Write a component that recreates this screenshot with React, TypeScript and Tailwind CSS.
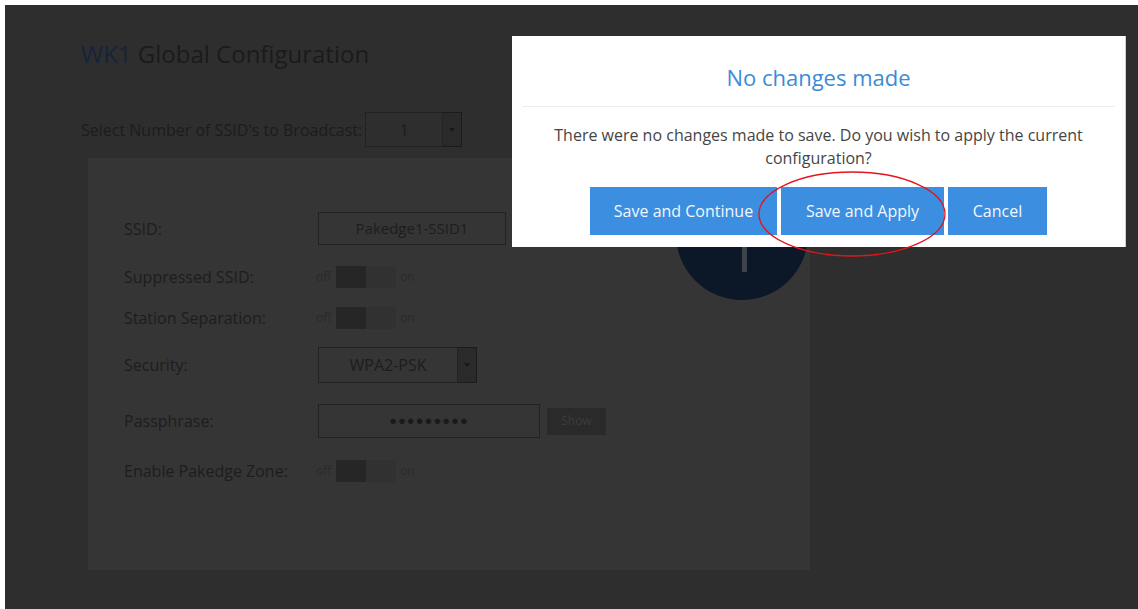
import React from "react";

interface FieldRowProps {
  label: string;
  height: string;
  top: string;
  children: React.ReactNode;
}

// one label/control line of the wireless form
const FieldRow = ({ label, height, top, children }: FieldRowProps) => (
  <div className={`flex items-center ${height} ${top}`}>
    <div className="w-[194px] shrink-0 text-[16px] text-[#1d1d1d]">{label}</div>
    <div className="flex items-center">{children}</div>
  </div>
);

const OffOnToggle = () => (
  <div className="flex items-center text-[12px] text-[#2a2a2a]">
    <span className="w-[20px] -ml-[2px]">off</span>
    <div className="flex h-[22px] w-[60px]">
      <div className="w-1/2 bg-[#262626]" />
      <div className="w-1/2 bg-[#313131]" />
    </div>
    <span className="ml-[4px]">on</span>
  </div>
);

const SelectBox = ({ value, width }: { value: string; width: string }) => (
  <div className="flex items-stretch h-full">
    <div
      className={`${width} flex items-center justify-center border border-[#222] text-[16px] text-[#1d1d1d]`}
    >
      {value}
    </div>
    <div className="w-[19px] flex items-center justify-center border border-[#1b1b1b] border-l-0 bg-[#2a2a2a]">
      <div className="w-0 h-0 border-l-[3px] border-r-[3px] border-t-[4px] border-l-transparent border-r-transparent border-t-[#181818]" />
    </div>
  </div>
);

const App = () => {
  return (
    <div className="relative w-[1138px] h-[609px] overflow-hidden bg-white pt-[5px] pl-[5px] font-['Open_Sans',sans-serif]">
      <div className="relative h-full bg-[#2e2e2e]">
        {/* page behind the dialog */}
        <div className="pl-[76px] pt-[33px]">
          <h1 className="text-[24px] leading-[32px] text-[#1b1b1b]">
            <span className="text-[#17233a]">WK1</span> Global Configuration
          </h1>

          <div className="mt-[42px] flex items-center h-[35px]">
            <span className="text-[16px] text-[#1c1c1c]">
              Select Number of SSID's to Broadcast:
            </span>
            <div className="ml-[3px] h-full">
              <SelectBox value="1" width="w-[78px]" />
            </div>
          </div>

          <div className="mt-[11px] ml-[7px] flex w-[722px] h-[412px] bg-[#353535]">
            <div className="flex-1 pl-[36px] pt-[54px]">
              <FieldRow label="SSID:" height="h-[33px]" top="mt-0">
                <div className="w-[188px] h-[33px] flex items-center justify-center border border-[#222] text-[15px] text-[#1d1d1d]">
                  Pakedge1-SSID1
                </div>
              </FieldRow>
              <FieldRow label="Suppressed SSID:" height="h-[22px]" top="mt-[21px]">
                <OffOnToggle />
              </FieldRow>
              <FieldRow label="Station Separation:" height="h-[22px]" top="mt-[19px]">
                <OffOnToggle />
              </FieldRow>
              <FieldRow label="Security:" height="h-[36px]" top="mt-[18px]">
                <div className="h-[36px]">
                  <SelectBox value="WPA2-PSK" width="w-[140px]" />
                </div>
              </FieldRow>
              <FieldRow label="Passphrase:" height="h-[34px]" top="mt-[21px]">
                <div className="w-[222px] h-[34px] flex items-center justify-center border border-[#222] text-[13px] tracking-[1px] text-[#1a1a1a]">
                  ●●●●●●●●●
                </div>
                <div className="ml-[7px] w-[59px] h-[27px] flex items-center justify-center bg-[#2a2a2a] text-[12px] text-[#3c3c3c]">
                  Show
                </div>
              </FieldRow>
              <FieldRow label="Enable Pakedge Zone:" height="h-[22px]" top="mt-[22px]">
                <OffOnToggle />
              </FieldRow>
            </div>

            <div className="relative mt-[10px] mr-[2px] w-[132px] h-[132px] shrink-0 rounded-full bg-[#0c1828]">
              <div className="absolute left-[66px] top-[60px] w-[5px] h-[44px] bg-[#3d434a]" />
            </div>
          </div>
        </div>

        {/* confirmation dialog */}
        <div className="absolute left-[507px] top-[31px] w-[614px] h-[211px] bg-white border-r border-[#cfcfcf]">
          <div className="h-[70px] flex items-center justify-center pt-[13px]">
            <h2 className="text-[22px] text-[#3c8bd6]">No changes made</h2>
          </div>
          <div className="mx-[10px] h-px bg-[#ececec]" />
          <p className="mt-[17px] px-[34px] text-center text-[16px] leading-[23px] text-[#454545]">
            There were no changes made to save. Do you wish to apply the current configuration?
          </p>
          <div className="mt-[17px] flex justify-center gap-[4px]">
            <button className="w-[187px] h-[48px] bg-[#3b8ee0] text-[16px] text-[#f2f7fd]">
              Save and Continue
            </button>
            <button className="w-[163px] h-[48px] bg-[#3b8ee0] text-[16px] text-[#f2f7fd]">
              Save and Apply
            </button>
            <button className="w-[99px] h-[48px] bg-[#3b8ee0] text-[16px] text-[#f2f7fd]">
              Cancel
            </button>
          </div>
        </div>

        {/* hand-drawn marker around the apply button */}
        <svg
          className="absolute left-[747px] top-[162px] pointer-events-none"
          width="200"
          height="98"
          viewBox="0 0 200 98"
        >
          <ellipse cx="100" cy="47" rx="93" ry="42" fill="none" stroke="#e3141b" strokeWidth="1.3" />
        </svg>
      </div>
    </div>
  );
};

export default App;
